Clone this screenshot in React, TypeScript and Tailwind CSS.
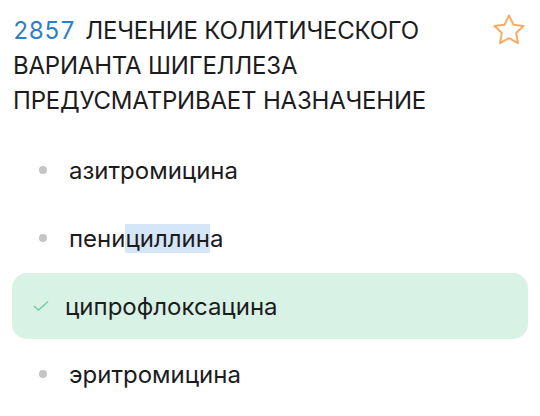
import React from "react";

type Option = { text: React.ReactNode; correct?: boolean };

const options: Option[] = [
  { text: "азитромицина" },
  {
    text: (
      <>
        пени<span className="bg-[#d5e6f8]">циллин</span>а
      </>
    ),
  },
  { text: "ципрофлоксацина", correct: true },
  { text: "эритромицина" },
];

function Star() {
  return (
    <svg width="38" height="38" viewBox="0 0 24 24" fill="none" stroke="#f6ad62" strokeWidth="1.25" strokeLinejoin="round" strokeLinecap="round">
      <path d="M12 2.8l2.8 5.9 6.4.8-4.7 4.4 1.2 6.4L12 17.2l-5.7 3.1 1.2-6.4-4.7-4.4 6.4-.8z" />
    </svg>
  );
}

function Check() {
  return (
    <svg width="16" height="12" viewBox="0 0 16 12" fill="none" stroke="#6fcf9f" strokeWidth="1.6" strokeLinecap="round" strokeLinejoin="round">
      <path d="M1.5 6.5l4 3.5L14.5 2" />
    </svg>
  );
}

export default function App() {
  return (
    <div className="w-[540px] h-[416px] bg-white overflow-hidden" style={{ fontFamily: "Inter, 'Noto Sans', sans-serif" }}>
      <div className="flex items-start pl-[13px] pr-[12px] pt-[13px]">
        <div className="flex-1 text-[24px] leading-[35px] text-[#1c1c1e] tracking-[-0.2px]">
          <span className="text-[#2f7fc6] tabular-nums tracking-normal">2857</span>
          <span className="ml-[10px]">ЛЕЧЕНИЕ КОЛИТИЧЕСКОГО</span>
          <br />
          ВАРИАНТА ШИГЕЛЛЕЗА
          <br />
          ПРЕДУСМАТРИВАЕТ НАЗНАЧЕНИЕ
        </div>
        <div className="-mt-[2px]">
          <Star />
        </div>
      </div>

      <div className="mt-[19px] px-[12px] flex flex-col gap-[2px]">
        {options.map((o, i) => (
          <div
            key={i}
            className={
              o.correct
                ? "h-[66px] rounded-[15px] bg-[#d8f2e5] flex items-center"
                : "h-[66px] flex items-center"
            }
          >
            <div className="w-[53px] flex justify-center pl-[4px]">
              {o.correct ? <Check /> : <div className="w-[8px] h-[8px] rounded-full bg-[#c4c4c6] ml-[4px]" />}
            </div>
            <div className={o.correct ? "text-[24px] leading-[37px] text-[#1c1c1e]" : "text-[24px] leading-[37px] text-[#1c1c1e] ml-[4px]"}>
              {o.text}
            </div>
          </div>
        ))}
      </div>
    </div>
  );
}
